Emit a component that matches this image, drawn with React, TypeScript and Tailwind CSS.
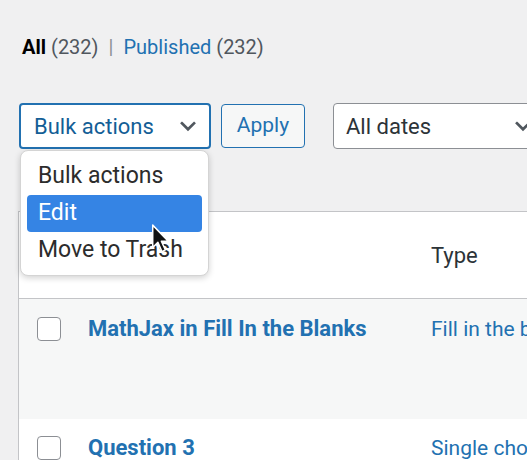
import React from "react";

function Chevron({ className }: { className?: string }) {
  return (
    <svg viewBox="0 0 20 20" className={className} fill="none">
      <path d="M4.5 7.5 L10 13 L15.5 7.5" stroke="currentColor" strokeWidth="2.4" strokeLinecap="square" strokeLinejoin="miter" />
    </svg>
  );
}

function Cursor() {
  return (
    <svg viewBox="0 0 20 28" className="absolute left-[151px] top-[223px] w-[23px] h-[33px]">
      <path d="M1.5 1.5 L1.5 21 L6 16.5 L9.5 24.5 L12.5 23 L9 15.5 L15 15.5 Z" fill="#111" stroke="#fff" strokeWidth="1.3" strokeLinejoin="round" />
    </svg>
  );
}

export default function App() {
  return (
    <div className="relative w-[527px] h-[460px] overflow-hidden bg-[#f0f0f1] font-['Roboto',sans-serif]">
      <div className="pl-[22px] pt-[34px] h-[26px] box-content flex items-center text-[20px] leading-[26px] text-[#50575e] whitespace-nowrap">
        <span className="font-bold text-black">All</span>
        <span className="ml-[5px]">(232)</span>
        <span className="mx-[10px] text-[#8c8f94]">|</span>
        <span className="text-[#2271b1]">Published</span>
        <span className="ml-[5px]">(232)</span>
      </div>

      <div className="mt-[43px] pl-[19px] flex items-center h-[46px]">
        <div className="w-[192px] h-[46px] shrink-0 border-2 border-[#2271b1] rounded-[4px] bg-white flex items-center justify-between pl-[13px] pr-[10px] text-[22px] text-[#135e96]">
          <span>Bulk actions</span>
          <Chevron className="w-[22px] h-[22px] text-[#50575e]" />
        </div>
        <div className="ml-[10px] w-[84px] h-[44px] shrink-0 border border-[#2271b1] rounded-[4px] bg-[#f6f7f7] flex items-center justify-center text-[21px] text-[#2271b1]">
          Apply
        </div>
        <div className="ml-[28px] w-[212px] h-[46px] shrink-0 border border-[#8c8f94] rounded-[4px] bg-white flex items-center justify-between pl-[12px] pr-[10px] text-[22px] text-[#2c3338]">
          <span>All dates</span>
          <Chevron className="w-[22px] h-[22px] text-[#50575e]" />
        </div>
      </div>

      <div className="mt-[62px] ml-[18px] w-[560px] border-l border-t border-[#c3c4c7] bg-white">
        <div className="h-[87px] flex items-center border-b border-[#c3c4c7]">
          <div className="w-[412px] shrink-0" />
          <span className="text-[22px] text-[#2c3338]">Type</span>
        </div>
        <div className="h-[120px] bg-[#f6f7f7] flex items-start pt-[18px]">
          <div className="ml-[18px] w-[24px] h-[24px] border border-[#8c8f94] rounded-[4px] bg-white shrink-0" />
          <div className="ml-[27px] w-[343px] shrink-0 -mt-[2px] text-[22px] font-bold text-[#2271b1] leading-[28px] whitespace-nowrap">MathJax in Fill In the Blanks</div>
          <div className="-mt-[2px] text-[21px] text-[#2271b1] leading-[28px] whitespace-nowrap">Fill in the blanks</div>
        </div>
        <div className="h-[60px] bg-white flex items-start pt-[17px]">
          <div className="ml-[18px] w-[24px] h-[24px] border border-[#8c8f94] rounded-[4px] bg-white shrink-0" />
          <div className="ml-[27px] w-[343px] shrink-0 -mt-[2px] text-[22px] font-bold text-[#2271b1] leading-[28px] whitespace-nowrap">Question 3</div>
          <div className="-mt-[2px] text-[21px] text-[#2271b1] leading-[28px] whitespace-nowrap">Single choice</div>
        </div>
      </div>

      <div className="absolute left-[20px] top-[150px] w-[189px] h-[126px] bg-white border border-[#d4d4d4] rounded-[8px] shadow-[0_2px_6px_rgba(0,0,0,0.18)] px-[6px] pt-[7px] text-[23px] text-[#2c2c2c]">
        <div className="h-[37px] flex items-center pl-[11px]">Bulk actions</div>
        <div className="h-[37px] flex items-center pl-[11px] bg-[#3584e4] text-white rounded-[4px]">Edit</div>
        <div className="h-[37px] flex items-center pl-[11px] whitespace-nowrap">Move to Trash</div>
      </div>
      <Cursor />
    </div>
  );
}
